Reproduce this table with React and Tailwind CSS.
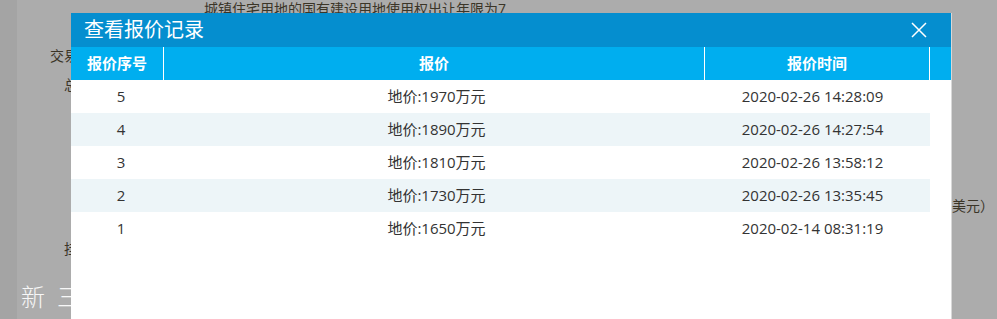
const rows = [
  { no: 5, price: "地价:1970万元", time: "2020-02-26 14:28:09" },
  { no: 4, price: "地价:1890万元", time: "2020-02-26 14:27:54" },
  { no: 3, price: "地价:1810万元", time: "2020-02-26 13:58:12" },
  { no: 2, price: "地价:1730万元", time: "2020-02-26 13:35:45" },
  { no: 1, price: "地价:1650万元", time: "2020-02-14 08:31:19" },
];

const font = { fontFamily: "'Open Sans', 'Noto Sans CJK SC', sans-serif" };

const App = () => {
  return (
    <div
      className="relative w-[997px] h-[319px] overflow-hidden bg-[#acacac] text-[#3b3528]"
      style={font}
    >
      {/* page behind the mask */}
      <div className="absolute left-0 top-0 w-[17px] h-full bg-[#a4a4a4]" />
      <span className="absolute left-[204px] top-[-2px] text-[14px]">城镇住宅用地的国有建设用地使用权出让年限为7</span>
      <span className="absolute left-[50px] top-[45px] text-[14px]">交易</span>
      <span className="absolute left-[64px] top-[74px] text-[14px]">总</span>
      <span className="absolute left-[952px] top-[195px] text-[14px]">美元）</span>
      <span className="absolute left-[64px] top-[238px] text-[14px]">挂</span>
      <span
        className="absolute left-[21px] top-[278px] text-[24px] font-light text-white/90 tracking-[12px]"
        style={{ fontFamily: "'Noto Sans CJK SC', serif" }}
      >
        新三
      </span>

      {/* dialog */}
      <div className="absolute left-[71px] top-[13px] w-[881px] h-[320px] bg-white border-r border-[#d8d8d8]">
        <div className="h-[34px] bg-[#058ecf] flex items-center justify-between pl-[13px] pr-[24px]">
          <span className="text-white text-[20px] leading-none">查看报价记录</span>
          <svg width="16" height="16" viewBox="0 0 16 16" className="text-white">
            <path d="M1 1L15 15M15 1L1 15" stroke="currentColor" strokeWidth="1.5" />
          </svg>
        </div>

        <div className="flex h-[33px] bg-[#00aeef] text-white text-[15px] font-bold">
          <div className="w-[93px] flex items-center justify-center border-r border-white">报价序号</div>
          <div className="w-[541px] flex items-center justify-center border-r border-white">报价</div>
          <div className="w-[225px] flex items-center justify-center border-r border-white">报价时间</div>
          <div className="flex-1" />
        </div>

        <div className="w-[859px] text-[15px] text-[#333]">
          {rows.map((r, i) => (
            <div key={r.no} className={`flex h-[33px] items-center ${i % 2 ? "bg-[#edf5f8]" : "bg-white"}`}>
              <div className="w-[100px] text-center">{r.no}</div>
              <div className="w-[531px] text-center">{r.price}</div>
              <div className="w-[221px] text-center">{r.time}</div>
            </div>
          ))}
        </div>
      </div>
    </div>
  );
};

export default App;
